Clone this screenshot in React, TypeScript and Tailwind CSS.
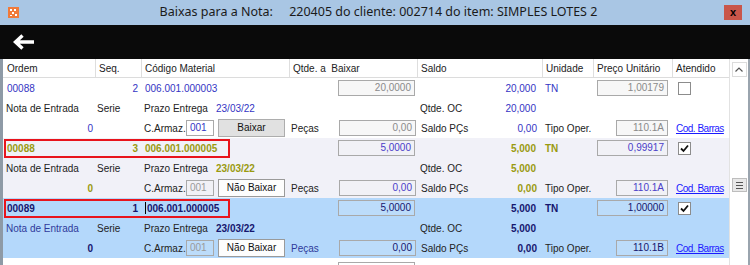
import React from "react";

type Tone = "plain" | "olive" | "navy";

const tone = {
  plain: { bg: "bg-white", val: "text-[#3434c4]", bold: "", label: "text-[#222]", blueLabel: "text-[#222]", box: "text-[#8a8a8a]", boxBg: "bg-[#f7f7f7]" },
  olive: { bg: "bg-[#f1f1f8]", val: "text-[#9a9a10]", bold: "font-bold", label: "text-[#222]", blueLabel: "text-[#222]", box: "text-[#4a3ec8]", boxBg: "bg-[#f1f1f6]" },
  navy: { bg: "bg-[#b4d8fb]", val: "text-[#16166e]", bold: "font-bold", label: "text-[#222]", blueLabel: "text-[#2f3a9a]", box: "text-[#16166e]", boxBg: "bg-[#bcdcfa]" },
};

type Rec = {
  ordem: string;
  seq: string;
  code: string;
  qtd: string;
  saldo: string;
  preco: string;
  atendido: boolean;
  tipo: string;
  tone: Tone;
  boxed?: boolean;
  cursor?: boolean;
};

const records: Rec[] = [
  { ordem: "00088", seq: "2", code: "006.001.000003", qtd: "20,0000", saldo: "20,000", preco: "1,00179", atendido: false, tipo: "110.1A", tone: "plain" },
  { ordem: "00088", seq: "3", code: "006.001.000005", qtd: "5,0000", saldo: "5,000", preco: "0,99917", atendido: true, tipo: "110.1A", tone: "olive", boxed: true },
  { ordem: "00089", seq: "1", code: "006.001.000005", qtd: "5,0000", saldo: "5,000", preco: "1,00000", atendido: true, tipo: "110.1B", tone: "navy", boxed: true, cursor: true },
];

function Box({ value, w, className }: { value: string; w: string; className: string }) {
  return (
    <div className={`${w} h-[16px] shrink-0 border border-[#a9a9a9] px-[3px] text-right leading-[14px] ${className}`}>{value}</div>
  );
}

function Check({ on }: { on: boolean }) {
  return (
    <div className="ml-[7px] flex h-[13px] w-[13px] shrink-0 items-center justify-center border border-[#8c8c8c] bg-white">
      {on && (
        <svg width="9" height="9" viewBox="0 0 9 9">
          <path d="M1 4.5 L3.5 7 L8 1.5" stroke="#111" strokeWidth="1.8" fill="none" />
        </svg>
      )}
    </div>
  );
}

function Record({ r }: { r: Rec }) {
  const t = tone[r.tone];
  const v = `${t.val} ${t.bold}`;
  return (
    <div className={`${t.bg} whitespace-nowrap text-[10px] [&>div>*]:shrink-0`}>
      <div className="relative flex h-[20px] items-center">
        <div className={`w-[92px] pl-[4px] ${v}`}>{r.ordem}</div>
        <div className={`w-[46px] pr-[3px] text-right ${v}`}>{r.seq}</div>
        <div className={`flex w-[195px] items-center pl-[4px] ${v}`}>
          {r.cursor && <span className="mr-px h-[12px] w-px bg-black" />}
          {r.code}
        </div>
        <div className="w-[81px] pl-[2px]">
          <Box value={r.qtd} w="w-[77px]" className={`${t.box} ${t.boxBg}`} />
        </div>
        <div className={`w-[122px] pr-[3px] text-right ${v}`}>{r.saldo}</div>
        <div className={`w-[56px] pl-[6px] ${v}`}>TN</div>
        <div className="w-[76px] pl-[2px]">
          <Box value={r.preco} w="w-[71px]" className={`${t.box} ${t.boxBg}`} />
        </div>
        <Check on={r.atendido} />
        {r.boxed && (
          <div className="absolute left-[1px] top-[1px] h-[19px] w-[226px] border-2 border-[#e8141c]" />
        )}
      </div>
      <div className="flex h-[20px] items-center">
        <div className={`w-[92px] pl-[3px] ${t.blueLabel}`}>Nota de Entrada</div>
        <div className={`w-[46px] pl-[2px] ${t.label}`}>Serie</div>
        <div className={`w-[75px] pl-[3px] ${t.label}`}>Prazo Entrega</div>
        <div className={`w-[201px] ${v}`}>23/03/22</div>
        <div className="flex w-[122px] justify-between pl-[3px] pr-[3px]">
          <span className={t.label}>Qtde. OC</span>
          <span className={v}>{r.saldo}</span>
        </div>
      </div>
      <div className="flex h-[20px] items-center">
        <div className={`w-[92px] pr-[2px] text-right ${v}`}>0</div>
        <div className="w-[46px]" />
        <div className={`w-[45px] pl-[3px] ${t.label}`}>C.Armaz.</div>
        <Box
          value="001"
          w="w-[28px]"
          className={`!text-left ${r.tone === "plain" ? "bg-white text-[#3434c4]" : `${t.boxBg} text-[#9a9a9a]`}`}
        />
        <div
          className={`ml-[4px] h-[18px] w-[67px] border text-center leading-[16px] text-[#111] ${
            r.tone === "plain" ? "border-[#adadad] bg-[#e1e1e1]" : "border-[#9a9a9a] bg-[#fdfdfd]"
          }`}
        >
          {r.tone === "plain" ? "Baixar" : "Não Baixar"}
        </div>
        <div className={`w-[52px] pl-[6px] ${t.blueLabel}`}>Peças</div>
        <div className="w-[81px] pl-[2px]">
          <Box value="0,00" w="w-[77px]" className={`${t.box} ${t.boxBg}`} />
        </div>
        <div className="flex w-[122px] justify-between pl-[3px] pr-[3px]">
          <span className={t.label}>Saldo PÇs</span>
          <span className={v}>0,00</span>
        </div>
        <div className={`w-[76px] pl-[5px] ${t.label}`}>Tipo Oper.</div>
        <Box value={r.tipo} w="w-[52px]" className={`${t.box} ${t.boxBg}`} />
        <a className="ml-[8px] tracking-[-0.5px] text-[#1a1aff] underline">Cod. Barras</a>
      </div>
    </div>
  );
}

const headers = [
  { label: "Ordem", w: "w-[92px]" },
  { label: "Seq.", w: "w-[46px]" },
  { label: "Código Material", w: "w-[148px]" },
  { label: "Qtde. a  Baixar", w: "w-[128px]" },
  { label: "Saldo", w: "w-[125px]" },
  { label: "Unidade", w: "w-[51px]" },
  { label: "Preço Unitário", w: "w-[79px]" },
  { label: "Atendido", w: "w-[57px]" },
];

export default function App() {
  return (
    <div className="h-[265px] w-[750px] overflow-hidden bg-white font-['Liberation_Sans',Arial,sans-serif]">
      <div className="flex h-[25px] items-center bg-[#a9c6e4] px-[8px]">
        <svg width="11" height="11" viewBox="0 0 11 11" className="shrink-0">
          <rect width="11" height="11" fill="#f07a3a" />
          <rect x="2" y="2" width="2" height="2" fill="#fff" />
          <rect x="6" y="2" width="2" height="2" fill="#fff" />
          <rect x="4" y="5" width="2" height="2" fill="#fff" />
          <rect x="2" y="8" width="2" height="1" fill="#fff" />
          <rect x="7" y="7" width="2" height="2" fill="#fff" />
        </svg>
        <div className="flex-1 whitespace-pre pl-[14px] text-center font-['Noto_Sans',sans-serif] text-[12.5px] text-[#1a1a1a]">
          {"Baixas para a Nota:     220405 do cliente: 002714 do item: SIMPLES LOTES 2"}
        </div>
        <div className="flex h-[15px] w-[18px] items-center justify-center bg-[#c9564a] text-[11px] font-bold leading-none text-black">
          x
        </div>
      </div>
      <div className="flex h-[34px] items-center bg-[#0a0a0a] pl-[12px]">
        <svg width="24" height="18" viewBox="0 0 24 18">
          <path d="M22 9 H4 M10.5 2.5 L3.5 9 L10.5 15.5" stroke="#fff" strokeWidth="3.4" fill="none" />
        </svg>
      </div>
      <div className="flex h-[206px] border-l-[3px] border-r-2 border-l-[#8e9aa6] border-r-[#9aa4ae]">
        <div className="w-[726px] overflow-hidden">
          <div className="flex h-[19px] items-center border-b border-[#dcdcdc] text-[10px] text-[#222]">
            {headers.map((h, i) => (
              <div
                key={h.label}
                className={`${h.w} h-full shrink-0 whitespace-pre pl-[3px] leading-[19px] ${i > 0 ? "border-l border-[#dedede]" : "pl-[4px]"}`}
              >
                {h.label}
              </div>
            ))}
          </div>
          {records.map((r, i) => (
            <Record key={i} r={r} />
          ))}
          <div className="flex h-[20px] items-center bg-white">
            <div className="ml-[335px] mt-[3px] h-[16px] w-[77px] border border-[#a9a9a9]" />
          </div>
        </div>
        <div className="flex w-[19px] flex-col items-center border-l border-[#e2e2e2] bg-white">
          <div className="mt-[3px] flex h-[15px] w-[15px] items-center justify-center border border-[#dcdcdc] text-[#555]">
            <svg width="8" height="5" viewBox="0 0 8 5">
              <path d="M0.5 4.5 L4 1 L7.5 4.5" stroke="#555" strokeWidth="1.2" fill="none" />
            </svg>
          </div>
          <div className="mt-[101px] flex h-[14px] w-[15px] flex-col items-center justify-center gap-[2px] border border-[#bdbdbd] bg-[#e8e8e8]">
            <span className="h-px w-[7px] bg-[#555]" />
            <span className="h-px w-[7px] bg-[#555]" />
            <span className="h-px w-[7px] bg-[#555]" />
          </div>
        </div>
      </div>
    </div>
  );
}
